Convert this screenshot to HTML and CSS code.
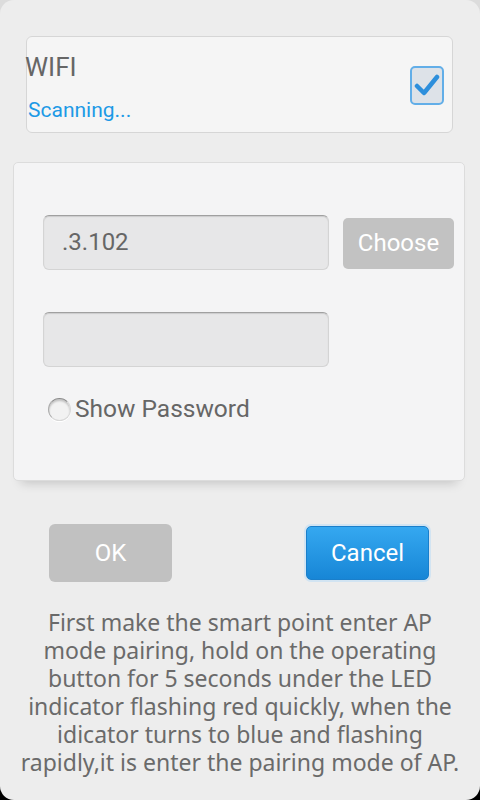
FILE: index.html
```html
<!DOCTYPE html>
<html>
<head>
<meta charset="utf-8">
<link rel="stylesheet" href="styles.css">
</head>
<body>
<div class="dialog">
  <div class="wifi-card">
    <div class="wifi-text">
      <div class="wifi-title">WIFI</div>
      <div class="wifi-status">Scanning...</div>
    </div>
    <div class="checkbox">
      <svg width="26" height="24" viewBox="0 0 26 24"><path d="M3 13 L10 20 L23 4" fill="none" stroke="#2d8fdc" stroke-width="4.5" stroke-linecap="round" stroke-linejoin="round"/></svg>
    </div>
  </div>

  <div class="form-card">
    <div class="row">
      <div class="input">.3.102</div>
      <div class="choose">Choose</div>
    </div>
    <div class="input input-second"></div>
    <div class="radio-row">
      <span class="radio"></span>
      <span class="radio-label">Show Password</span>
    </div>
  </div>

  <div class="buttons">
    <div class="btn btn-ok">OK</div>
    <div class="btn btn-cancel">Cancel</div>
  </div>

  <p class="info">First make the smart point enter AP<br>mode pairing, hold on the operating<br>button for 5 seconds under the LED<br>indicator flashing red quickly, when the<br>idicator turns to blue and flashing<br>rapidly,it is enter the pairing mode of AP.</p>
</div>
</body>
</html>
```
FILE: styles.css
```css
html {
  background: linear-gradient(#dcdcdc 0 50%, #000 50% 100%);
}
body {
  margin: 0;
  width: 480px;
  height: 800px;
  overflow: hidden;
  font-family: Roboto, "Liberation Sans", sans-serif;
  color: #666;
}
.dialog {
  box-sizing: border-box;
  width: 480px;
  height: 800px;
  background: #ededed;
  border-radius: 14px;
  padding-top: 36px;
  overflow: hidden;
}
.wifi-card {
  box-sizing: border-box;
  height: 97px;
  margin: 0 27px 0 26px;
  background: #f5f5f5;
  border: 1px solid #d6d6d6;
  border-radius: 6px;
  display: flex;
  align-items: center;
  padding-right: 8px;
}
.wifi-text {
  align-self: flex-start;
  flex: 1;
  padding-top: 15px;
  margin-left: -2px;
  display: flex;
  flex-direction: column;
  gap: 16px;
}
.wifi-title {
  font-size: 26px;
  line-height: 30px;
  color: #666;
}
.wifi-status {
  font-size: 21px;
  line-height: 24px;
  color: #1d9ae6;
  padding-left: 3px;
}
.checkbox {
  box-sizing: border-box;
  width: 34px;
  height: 39px;
  border: 2px solid #62aee8;
  border-radius: 5px;
  background: #dde2e8;
  display: flex;
  align-items: center;
  justify-content: center;
  margin-top: 1px;
}
.form-card {
  box-sizing: border-box;
  height: 319px;
  margin: 29px 15px 0 13px;
  background: #f4f4f5;
  border: 1px solid #dcdcdc;
  border-radius: 5px;
  padding: 52px 10px 0 29px;
  box-shadow: 0 10px 10px -8px rgba(0,0,0,0.18);
}
.row {
  display: flex;
  align-items: center;
  gap: 14px;
}
.input {
  box-sizing: border-box;
  width: 286px;
  height: 55px;
  background: #e7e7e8;
  border: 1px solid #d4d4d4;
  border-top-color: #a0a0a0;
  border-radius: 6px;
  box-shadow: inset 0 1px 1px rgba(0,0,0,0.12);
  font-size: 24px;
  line-height: 53px;
  padding-left: 18px;
  color: #666;
}
.choose {
  box-sizing: border-box;
  width: 111px;
  height: 51px;
  background: #c2c2c2;
  border-radius: 5px;
  color: #fff;
  font-size: 24px;
  line-height: 51px;
  text-align: center;
  margin-top: 2px;
}
.input-second {
  margin-top: 42px;
}
.radio-row {
  display: flex;
  align-items: center;
  gap: 4px;
  margin-top: 28px;
  margin-left: 5px;
  height: 28px;
}
.radio {
  box-sizing: border-box;
  width: 23px;
  height: 23px;
  border-radius: 50%;
  background: #f2f2f2;
  border: 1px solid #d8d8d8;
  border-top-color: #8a8a8a;
  border-left-color: #aaa;
  box-shadow: inset 0 2px 2px rgba(0,0,0,0.2), 0 1px 0 #fff;
}
.radio-label {
  font-size: 24.5px;
  line-height: 28px;
  color: #666;
}
.buttons {
  display: flex;
  align-items: center;
  margin-top: 43px;
  padding: 0 51px 0 49px;
  height: 58px;
}
.btn {
  box-sizing: border-box;
  color: #fff;
  font-size: 24px;
  text-align: center;
  border-radius: 6px;
}
.btn-ok {
  width: 123px;
  height: 58px;
  line-height: 58px;
  background: #c1c1c1;
}
.btn-cancel {
  margin-left: auto;
  width: 123px;
  height: 54px;
  line-height: 52px;
  background: linear-gradient(#35a8f0, #1786d6);
  border: 1px solid #1a7fcb;
  box-shadow: 0 0 0 2px #d2e4f2;
  border-radius: 5px;
}
.info {
  margin: 26px 0 0;
  padding: 0 8px;
  font-family: "Noto Sans", "Open Sans", sans-serif;
  font-size: 23px;
  line-height: 28px;
  text-align: center;
  color: #6a6a6a;
  white-space: nowrap;
}
```
